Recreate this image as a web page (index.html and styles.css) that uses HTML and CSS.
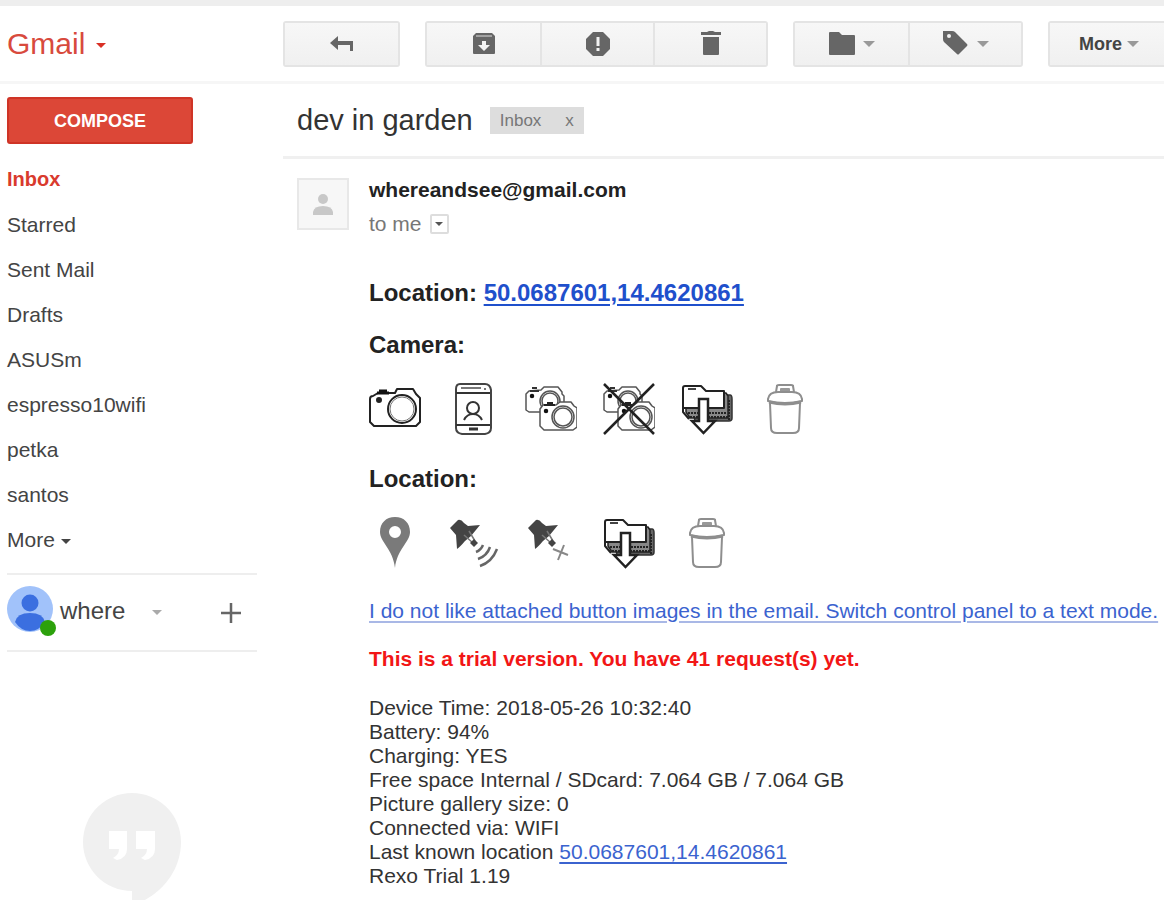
FILE: index.html
```html
<!DOCTYPE html>
<html lang="en">
<head>
<meta charset="utf-8">
<meta name="viewport" content="width=device-width, initial-scale=1">
<title>dev in garden - Gmail</title>
<link rel="stylesheet" href="styles.css">
</head>
<body>
<svg class="defs" aria-hidden="true">
  <symbol id="folders" viewBox="0 0 52 52">
    <g stroke-linejoin="round">
      <path d="M9 12h40q2 0 2 4v19q0 3-3 3H14z" fill="#666" stroke="#333" stroke-width="1.5"/>
      <path d="M5 10h40l2 3v22H9l-4-6z" fill="#888" stroke="#222" stroke-width="1.5"/>
      <path d="M7 30h38M9 34h38M48 17v20" fill="none" stroke="#222" stroke-width="2" stroke-dasharray="2 1"/>
      <path d="M2 25V5q0-2 2-2h16l5 5h18v17z" fill="#fff" stroke="#222" stroke-width="2"/>
      <path d="M2 25v4l6 7" fill="none" stroke="#222" stroke-width="2"/>
      <path d="M7 6h8" stroke="#444" stroke-width="2"/>
      <path d="M18 16h9v22h7L22.500 50 11 38h7z" fill="#fff" stroke="#222" stroke-width="2.500" stroke-linejoin="miter"/>
    </g>
  </symbol>
  <symbol id="bin" viewBox="0 0 52 52">
    <g fill="none" stroke="#8e8e8e" stroke-width="2" stroke-linejoin="round">
      <path d="M17 9l1-6q0-1 2-1h12q2 0 2 1l1 6"/>
      <path d="M22 8V6h8v2z" stroke="#999"/>
      <path d="M9 16q1-7 10-7h14q9 0 10 7v2q-17 4-34 0z"/>
      <path d="M10 19q16 4 32 0" stroke-width="3"/>
      <path d="M11 20l1 25q0 5 6 5h16q6 0 6-5l1-25"/>
    </g>
  </symbol>
  <symbol id="cameras" viewBox="0 0 52 52">
    <g fill="#fff" stroke="#555" stroke-width="1.500" stroke-linejoin="round">
      <path d="M1 27V11l3-3 12-1 3-3h14l4 5v2l2 2v14l-3 2H4z"/>
      <circle cx="25" cy="18" r="10"/>
      <circle cx="25" cy="18" r="8"/>
      <path d="M5 8h9M7 5h5" stroke="#333" stroke-width="2"/>
      <circle cx="7" cy="13" r="1.500" fill="#111" stroke="#111"/>
      <path d="M15 43V26l3-4h13l4-3h11l3 4 3 2v19l-4 3H19z"/>
      <circle cx="38" cy="34" r="11"/>
      <circle cx="38" cy="34" r="9"/>
      <path d="M19 22h11M22 20h6" stroke="#222" stroke-width="2"/>
      <circle cx="21" cy="28" r="1.500" fill="#111" stroke="#111"/>
    </g>
  </symbol>
  <symbol id="pushpin" viewBox="0 0 52 52">
    <path d="M3 11l8-8q3-1 6 3l4 3 12-1-9 11-6 5q-5 6-8 8l-1-14z" fill="#444"/>
    <path d="M17 18l9 8M22 14l6 10" stroke="#777" stroke-width="1.500"/>
    <path d="M23 26l4-4 4 4-4 4z" fill="#444"/>
  </symbol>
</svg>

<header class="topbar">
  <button class="brand" type="button">Gmail <span class="caret caret-red"></span></button>
  <div class="toolbar">
    <div class="group">
      <button class="tool" type="button" aria-label="Back"><svg width="24" height="24" viewBox="0 0 24 24"><path d="M0 11l8-7v5h15v10h-3v-6H8v5z" fill="#666"/></svg></button>
    </div>
    <div class="group">
      <button class="tool" type="button" aria-label="Archive"><svg width="24" height="24" viewBox="0 0 24 24"><path d="M4 1h16l3 3v17q0 1-1 1H2q-1 0-1-1V4z" fill="#666"/><path d="M4 4h16" stroke="#ddd"/><path d="M10 9h4v4h4l-6 6-6-6h4z" fill="#f3f3f3"/></svg></button>
      <button class="tool" type="button" aria-label="Report spam"><svg width="24" height="24" viewBox="0 0 24 24"><path d="M7 0h10l7 7v10l-7 7H7l-7-7V7z" fill="#666"/><path d="M10.500 5h3v9h-3zM10.500 16h3v3h-3z" fill="#f3f3f3"/></svg></button>
      <button class="tool" type="button" aria-label="Delete"><svg width="24" height="26" viewBox="0 0 24 26"><path d="M2 1h6l2-1h4l2 1h6v3H2zM4 6h16v17q0 1-1 1H5q-1 0-1-1z" fill="#666"/></svg></button>
    </div>
    <div class="group">
      <button class="tool" type="button" aria-label="Move to"><svg width="28" height="26" viewBox="0 0 28 26"><path d="M1 2q0-1 1-1h9l3 3h12q1 0 1 1v18q0 1-1 1H2q-1 0-1-1z" fill="#666"/></svg><span class="caret caret-grey"></span></button>
      <button class="tool" type="button" aria-label="Labels"><svg width="28" height="26" viewBox="0 0 28 26"><path d="M1 0h9q2 0 3 1l12 12q1 1 0 2l-8 8q-1 1-2 0L2 11q-1-1-1-3z" fill="#666"/><circle cx="7" cy="5" r="2" fill="#f3f3f3"/></svg><span class="caret caret-grey"></span></button>
    </div>
    <div class="group">
      <button class="tool tool-more" type="button">More <span class="caret caret-grey"></span></button>
    </div>
  </div>
</header>

<div class="layout">
  <aside class="sidebar">
    <button class="compose" type="button">COMPOSE</button>
    <nav class="folders">
      <a class="current" href="#inbox">Inbox</a>
      <a href="#starred">Starred</a>
      <a href="#sent">Sent Mail</a>
      <a href="#drafts">Drafts</a>
      <a href="#asusm">ASUSm</a>
      <a href="#espresso">espresso10wifi</a>
      <a href="#petka">petka</a>
      <a href="#santos">santos</a>
      <a href="#more">More <span class="caret caret-dark"></span></a>
    </nav>
    <div class="account">
      <svg width="50" height="52" viewBox="0 0 50 52" aria-hidden="true"><circle cx="23" cy="24" r="23" fill="#a1c2fa"/><circle cx="23" cy="18" r="8.500" fill="#3b6fe0"/><path d="M8 37q2-9 15-9t15 9q-6 9-15 9T8 37z" fill="#3b6fe0"/><circle cx="41" cy="43" r="8" fill="#2ca10c"/></svg>
      <button class="who" type="button">where <span class="caret caret-light"></span></button>
      <button class="add" type="button" aria-label="New conversation"><svg width="20" height="20" viewBox="0 0 20 20"><path d="M10 0v20M0 10h20" stroke="#666" stroke-width="2.500"/></svg></button>
    </div>
    <svg class="bubble" width="100" height="108" viewBox="0 0 100 108" aria-hidden="true"><path d="M50 1a49 49 0 0 0 0 98v9h13c20-11 36-32 36-58A49 49 0 0 0 50 1z" fill="#f0f0f0"/><path d="M27 39h18v18q0 9-10 11l-4-2q6-3 6-9H27zM54 39h19v18q0 9-10 11l-4-2q6-3 6-9H54z" fill="#fff"/></svg>
  </aside>

  <main class="message">
    <div class="subject">
      <h1>dev in garden</h1>
      <span class="label">Inbox <button type="button" aria-label="Remove label">x</button></span>
    </div>
    <div class="mail">
      <svg class="avatar" width="52" height="52" viewBox="0 0 52 52" aria-hidden="true"><rect x="1" y="1" width="50" height="50" fill="#f7f7f7" stroke="#e8e8e8" stroke-width="2"/><circle cx="26" cy="21" r="5" fill="#c8c8c8"/><path d="M16 37v-3q1-6 10-6t10 6v3z" fill="#c8c8c8"/></svg>
      <div class="content">
        <div class="from">whereandsee@gmail.com</div>
        <div class="to">to me <button class="details" type="button" aria-label="Show details"><span class="caret caret-small"></span></button></div>

        <h2>Location: <a href="#map">50.0687601,14.4620861</a></h2>
        <h2>Camera:</h2>
        <div class="actions">
          <a href="#photo" aria-label="Take photo"><svg viewBox="0 0 52 52"><g fill="none" stroke="#222" stroke-width="2" stroke-linejoin="round"><path d="M1 39V16q0-3 3-3l5-3h17l2-4h16l3 5 4 4v24l-4 4H5z"/><circle cx="33" cy="26" r="14"/><circle cx="33" cy="26" r="12" stroke="#777" stroke-width="1"/><path d="M8 10h12M10 8h8" stroke="#111" stroke-width="3"/><circle cx="10" cy="17" r="2" fill="#222"/></g></svg></a>
          <a href="#front" aria-label="Front camera"><svg viewBox="0 0 52 52"><g fill="none" stroke="#333" stroke-width="2"><path d="M13 1h25q5 0 6 6v38q0 5-6 6H15q-6-1-6-6V6q0-5 4-5z" stroke="#444"/><path d="M9 10h34M9 42h34"/><path d="M14 5h20M38 5v2" stroke="#777" stroke-width="2"/><path d="M22 46h9" stroke-width="3"/><circle cx="26" cy="25" r="6"/><path d="M17 37q3-6 9-6t9 6"/></g></svg></a>
          <a href="#both" aria-label="Both cameras"><svg><use href="#cameras"/></svg></a>
          <a href="#nocam" aria-label="Disable cameras"><svg viewBox="0 0 52 52"><use href="#cameras"/><path d="M1 1l50 50M51 1L1 51" stroke="#222" stroke-width="2.500"/></svg></a>
          <a href="#get-photos" aria-label="Download photos"><svg><use href="#folders"/></svg></a>
          <a href="#del-photos" aria-label="Delete photos"><svg><use href="#bin"/></svg></a>
        </div>
        <h2>Location:</h2>
        <div class="actions">
          <a href="#locate" aria-label="Locate"><svg viewBox="0 0 52 52"><path fill-rule="evenodd" d="M26 0C17 0 11 6 11 15c0 10 13 17 15 36 2-19 15-26 15-36C41 6 35 0 26 0zm0 9a6 6 0 1 1 0 12 6 6 0 0 1 0-12z" fill="#7a7a7a"/></svg></a>
          <a href="#track" aria-label="Start tracking"><svg viewBox="0 0 52 52"><use href="#pushpin"/><g fill="none" stroke="#666" stroke-width="2.500"><path d="M29 35q5-2 7-7M31 42q9-3 12-12M33 49q12-4 17-17"/></g></svg></a>
          <a href="#untrack" aria-label="Stop tracking"><svg viewBox="0 0 52 52"><use href="#pushpin"/><path d="M28 32l15 6M39 28l-6 15" stroke="#888" stroke-width="2"/></svg></a>
          <a href="#get-places" aria-label="Download locations"><svg><use href="#folders"/></svg></a>
          <a href="#del-places" aria-label="Delete locations"><svg><use href="#bin"/></svg></a>
        </div>
        <p class="switch"><a href="#text-mode">I do not like attached button images in the email. Switch control panel to a text mode.</a></p>
        <p class="trial">This is a trial version. You have 41 request(s) yet.</p>
        <p class="status">Device Time: 2018-05-26 10:32:40<br>
        Battery: 94%<br>
        Charging: YES<br>
        Free space Internal / SDcard: 7.064 GB / 7.064 GB<br>
        Picture gallery size: 0<br>
        Connected via: WIFI<br>
        Last known location <a href="#map">50.0687601,14.4620861</a><br>
        Rexo Trial 1.19</p>
      </div>
    </div>
  </main>
</div>
</body>
</html>
```

FILE: styles.css
```css
* { box-sizing: border-box; }
body {
  margin: 0;
  background: #fff;
  color: #333;
  font: 21px/24px "Liberation Sans", Arial, sans-serif;
  overflow-x: hidden;
}
button { font: inherit; color: inherit; background: none; border: 0; padding: 0; cursor: pointer; }
a { color: #3b63cf; text-underline-offset: 3px; }
h1, h2, p { margin: 0; }
svg { display: block; flex: none; }
.defs { position: absolute; width: 0; height: 0; }

.caret {
  display: inline-block;
  border: 5px solid transparent;
  border-bottom: 0;
  vertical-align: middle;
}
.caret-red { border-top-color: #d93025; margin-left: 2px; }
.caret-grey { border-width: 6px 6px 0; border-top-color: #999; }
.caret-dark { border-top-color: #444; }
.caret-light { border-top-color: #aaa; margin-left: 20px; }
.caret-small { border-width: 4px 4px 0; border-top-color: #555; }

.topbar {
  display: flex;
  align-items: center;
  height: 84px;
  border-top: 6px solid #eee;
  border-bottom: 3px solid #f6f6f6;
}
.brand {
  flex: 0 0 283px;
  padding-left: 7px;
  text-align: left;
  font-size: 30px;
  line-height: 36px;
  color: #d84a3d;
}
.toolbar { display: flex; flex: 1; gap: 25px; min-width: 0; overflow: hidden; }
.group { display: flex; flex: none; border: 2px solid #e4e4e4; border-radius: 3px; }
.tool {
  display: flex;
  align-items: center;
  justify-content: center;
  gap: 7px;
  width: 113px;
  height: 42px;
  background: linear-gradient(#f7f7f7, #f0f0f0);
}
.tool + .tool { border-left: 2px solid #e4e4e4; }
.tool-more { width: 118px; gap: 5px; font-size: 18px; font-weight: bold; color: #444; }

.layout { display: flex; }
.sidebar { flex: 0 0 283px; padding: 13px 26px 0 7px; }
.compose {
  width: 186px;
  height: 47px;
  border: 2px solid #cf3426;
  border-radius: 3px;
  background: #dc4737;
  color: #fff;
  font-size: 18px;
  font-weight: bold;
}
.folders { display: flex; flex-direction: column; padding: 13px 0 11px; }
.folders a { line-height: 45px; color: #444; text-decoration: none; }
.folders .current { font-size: 20px; font-weight: bold; color: #d93a2d; }
.account {
  display: flex;
  align-items: center;
  height: 79px;
  padding-bottom: 4px;
  border-top: 2px solid #eee;
  border-bottom: 2px solid #eee;
}
.who { flex: 1; padding-left: 3px; text-align: left; font-size: 24px; color: #444; }
.add { padding: 4px 16px 0; }
.bubble { margin: 140px 0 0 75px; }

.message { flex: 1; min-width: 0; }
.subject {
  display: flex;
  align-items: center;
  gap: 17px;
  height: 75px;
  padding: 0 14px;
  border-bottom: 3px solid #f0f0f0;
}
h1 { font-size: 29px; line-height: 36px; font-weight: normal; color: #333; }
.label {
  display: flex;
  gap: 24px;
  padding: 0 10px;
  background: #ddd;
  color: #777;
  font-size: 17px;
  line-height: 27px;
}
.mail { display: flex; gap: 20px; padding: 19px 0 0 14px; }
.content { flex: 1; min-width: 0; }
.from { font-weight: bold; color: #222; }
.to { display: flex; align-items: center; gap: 8px; padding-top: 10px; color: #777; }
.details { display: flex; align-items: center; justify-content: center; width: 19px; height: 20px; border: 2px solid #ddd; border-radius: 2px; }
h2 { font-size: 24px; line-height: 28px; color: #222; padding-top: 24px; }
.to + h2 { padding-top: 43px; }
h2 a { color: #1f50cc; }
.actions { display: flex; gap: 26px; padding-top: 24px; }
.actions + h2 { padding-top: 30px; }
.actions svg { width: 52px; height: 52px; }
.switch { padding-top: 30px; }
.switch a { text-decoration-color: #a9b8e6; text-decoration-thickness: 2px; }
.trial { padding: 24px 0 25px; font-weight: bold; color: #f21616; }
```
